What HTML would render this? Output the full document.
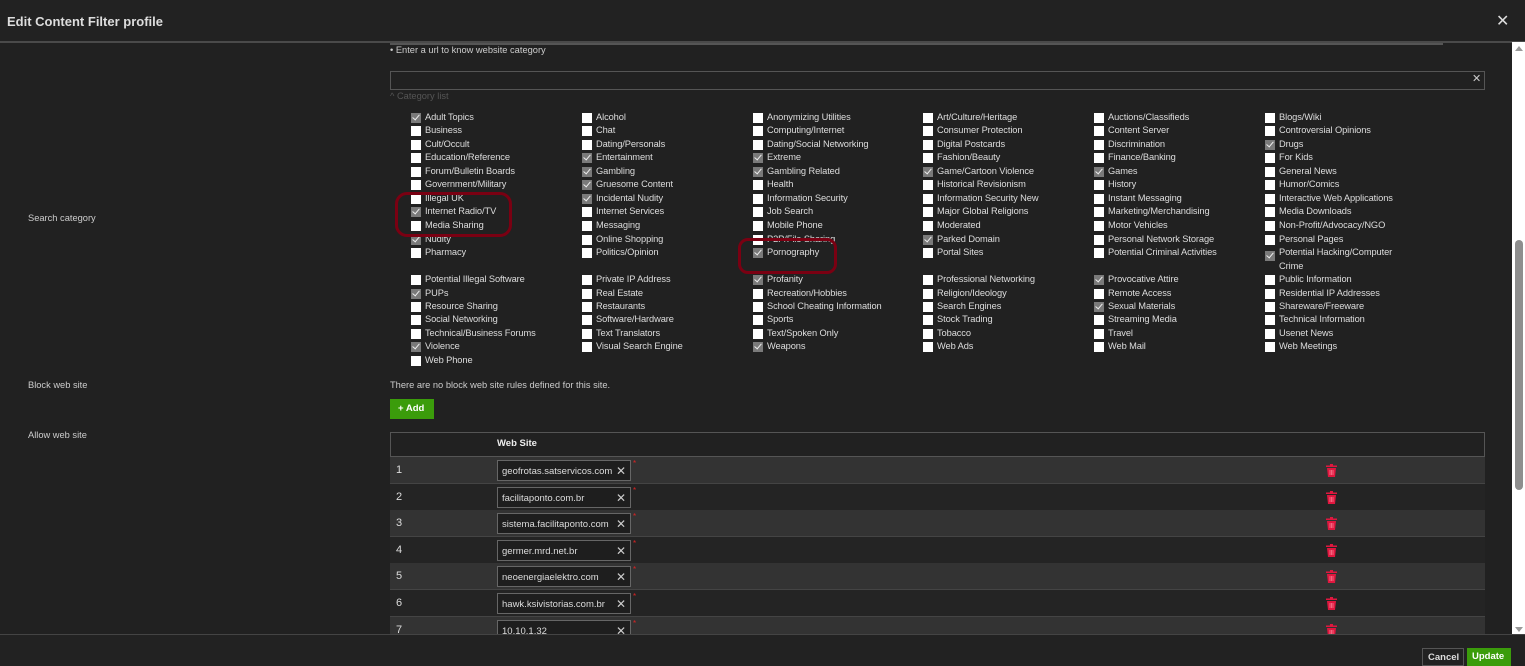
<!DOCTYPE html>
<html><head><meta charset="utf-8"><style>
*{margin:0;padding:0;box-sizing:border-box}
body{width:1525px;height:666px;background:#212121;font-family:"Liberation Sans",sans-serif;color:#ddd;position:relative;overflow:hidden}
.a{position:absolute;white-space:nowrap}
.hdr{left:0;top:0;width:1525px;height:43px;background:#222;border-bottom:2px solid #4a4a4a}
.cb{position:absolute;width:10px;height:10px;background:#fff}
.cb.c{background:#7a7a7a}
.cb.c:after{content:"";position:absolute;left:3px;top:0px;width:3px;height:6px;border:solid #eee;border-width:0 1px 1px 0;transform:rotate(40deg)}
.lbl{position:absolute;font-size:9.3px;color:#ddd;white-space:nowrap;letter-spacing:-0.1px}
.sm{font-size:9.3px;color:#ccc}
.row{position:absolute;left:390px;width:1095px;height:27px;border-bottom:1px solid #444;font-size:11px;color:#ddd}
.inp{position:absolute;left:107px;top:3px;width:134px;height:21px;border:1px solid #666;background:#1e1e1e;font-size:9.5px;padding:5px 0 0 4px;color:#ddd;overflow:hidden;white-space:nowrap}
.inp span{position:absolute;right:4px;top:3px;font-size:12px;color:#ccc}
.star{position:absolute;left:243px;top:2px;color:#d22;font-size:8px}
.trash{position:absolute;left:936px;top:7px;width:11px;height:13px}
</style></head><body>
<div class="a hdr"></div>
<div class="a" style="left:7px;top:14px;font-size:13px;font-weight:bold;color:#ddd">Edit Content Filter profile</div>
<div class="a" style="left:1496px;top:11px;font-size:16px;color:#ddd">✕</div>
<div class="a" style="left:390px;top:43px;width:1053px;height:2px;background:#555"></div>
<div class="a sm" style="left:390px;top:45px">• Enter a url to know website category</div>
<div class="a" style="left:390px;top:71px;width:1095px;height:19px;border:1px solid #555"></div>
<div class="a" style="left:1472px;top:72px;font-size:11px;color:#ccc">✕</div>
<div class="a sm" style="left:390px;top:91px;color:#555">^ Category list</div>
<div class="a sm" style="left:28px;top:213px">Search category</div>
<div class="a sm" style="left:28px;top:380px">Block web site</div>
<div class="a sm" style="left:28px;top:430px">Allow web site</div>
<div id="grid"></div>
<div class="a" style="left:395px;top:192px;width:117px;height:45px;border:3px solid #7a0012;border-radius:12px"></div>
<div class="a" style="left:738px;top:238px;width:99px;height:36px;border:3px solid #7a0012;border-radius:10px"></div>
<div class="a sm" style="left:390px;top:380px">There are no block web site rules defined for this site.</div>
<div class="a" style="left:390px;top:399px;width:44px;height:20px;background:#3b9c0b;color:#fff;font-size:9.5px;font-weight:bold;padding:4px 0 0 8px">+ Add</div>
<div class="a" style="left:390px;top:432px;width:1095px;height:210px;border:1px solid #555;border-bottom:none"></div>
<div class="a" style="left:390px;top:432px;width:1095px;height:25px;border-bottom:1px solid #555"></div>
<div class="a" style="left:497px;top:438px;font-size:9.5px;font-weight:bold;color:#eee">Web Site</div>
<div id="rows"></div>
<div class="a" style="left:1512px;top:42px;width:13px;height:592px;background:#fff"></div>
<div class="a" style="left:1515px;top:240px;width:8px;height:250px;background:#8e8e8e;border-radius:4px"></div>
<div class="a" style="left:1515px;top:46px;width:0;height:0;border-left:4px solid transparent;border-right:4px solid transparent;border-bottom:5px solid #999"></div>
<div class="a" style="left:1515px;top:627px;width:0;height:0;border-left:4px solid transparent;border-right:4px solid transparent;border-top:5px solid #999"></div>
<div class="a" style="left:0;top:634px;width:1525px;height:32px;background:#222;border-top:1px solid #444"></div>
<div class="a" style="left:1422px;top:648px;width:42px;height:18px;border:1px solid #555;font-size:9.5px;color:#ddd;padding:3px 0 0 5px;font-weight:bold">Cancel</div>
<div class="a" style="left:1467px;top:648px;width:44px;height:18px;background:#3b9c0b;font-size:9.5px;color:#fff;padding:3px 0 0 5px;font-weight:bold">Update</div>
<script>
var rows=[
["Adult Topics*","Alcohol","Anonymizing Utilities","Art/Culture/Heritage","Auctions/Classifieds","Blogs/Wiki"],
["Business","Chat","Computing/Internet","Consumer Protection","Content Server","Controversial Opinions"],
["Cult/Occult","Dating/Personals","Dating/Social Networking","Digital Postcards","Discrimination","Drugs*"],
["Education/Reference","Entertainment*","Extreme*","Fashion/Beauty","Finance/Banking","For Kids"],
["Forum/Bulletin Boards","Gambling*","Gambling Related*","Game/Cartoon Violence*","Games*","General News"],
["Government/Military","Gruesome Content*","Health","Historical Revisionism","History","Humor/Comics"],
["Illegal UK","Incidental Nudity*","Information Security","Information Security New","Instant Messaging","Interactive Web Applications"],
["Internet Radio/TV*","Internet Services","Job Search","Major Global Religions","Marketing/Merchandising","Media Downloads"],
["Media Sharing","Messaging","Mobile Phone","Moderated","Motor Vehicles","Non-Profit/Advocacy/NGO"],
["Nudity*","Online Shopping","P2P/File Sharing","Parked Domain*","Personal Network Storage","Personal Pages"],
["Pharmacy","Politics/Opinion","Pornography*","Portal Sites","Potential Criminal Activities","Potential Hacking/Computer<br>Crime*"],
["Potential Illegal Software","Private IP Address","Profanity*","Professional Networking","Provocative Attire*","Public Information"],
["PUPs*","Real Estate","Recreation/Hobbies","Religion/Ideology","Remote Access","Residential IP Addresses"],
["Resource Sharing","Restaurants","School Cheating Information","Search Engines","Sexual Materials*","Shareware/Freeware"],
["Social Networking","Software/Hardware","Sports","Stock Trading","Streaming Media","Technical Information"],
["Technical/Business Forums","Text Translators","Text/Spoken Only","Tobacco","Travel","Usenet News"],
["Violence*","Visual Search Engine","Weapons*","Web Ads","Web Mail","Web Meetings"],
["Web Phone"]];
var ys=[118,131,145,158,172,185,199,212,226,240,253,280,294,307,320,334,347,361];
var xs=[411,582,753,923,1094,1265],h="";
rows.forEach(function(r,i){r.forEach(function(t,j){var c=t.slice(-1)=="*";if(c)t=t.slice(0,-1);
var y=ys[i],x=xs[j];h+='<div class="cb'+(c?' c':'')+'" style="left:'+x+'px;top:'+(y-5+(j==5&&i==10?3:0))+'px"></div><div class="lbl" style="left:'+(x+14)+'px;top:'+(y-7)+'px;line-height:13.5px">'+t+'</div>';});});
document.getElementById('grid').innerHTML=h;
var s=["geofrotas.satservicos.com","facilitaponto.com.br","sistema.facilitaponto.com","germer.mrd.net.br","neoenergiaelektro.com","hawk.ksivistorias.com.br","10.10.1.32"];
var tr='<svg class="trash" viewBox="0 0 11 13"><rect x="0" y="1.5" width="11" height="1.5" fill="#e0173f"/><rect x="4" y="0" width="3" height="2" fill="#e0173f"/><path d="M1 4h9l-1 9H2z" fill="#e0173f"/><path d="M4 6v5M5.5 6v5M7 6v5" stroke="#f9a" stroke-width="0.6"/></svg>';
h="";s.forEach(function(t,i){h+='<div class="row" style="top:'+(457+i*26.6)+'px;background:'+(i%2?'#242424':'#333')+'"><div style="position:absolute;left:6px;top:7px">'+(i+1)+'</div><div class="inp">'+t+'<span>✕</span></div><div class="star">*</div>'+tr+'</div>';});
document.getElementById('rows').innerHTML=h;
</script>
</body></html>
